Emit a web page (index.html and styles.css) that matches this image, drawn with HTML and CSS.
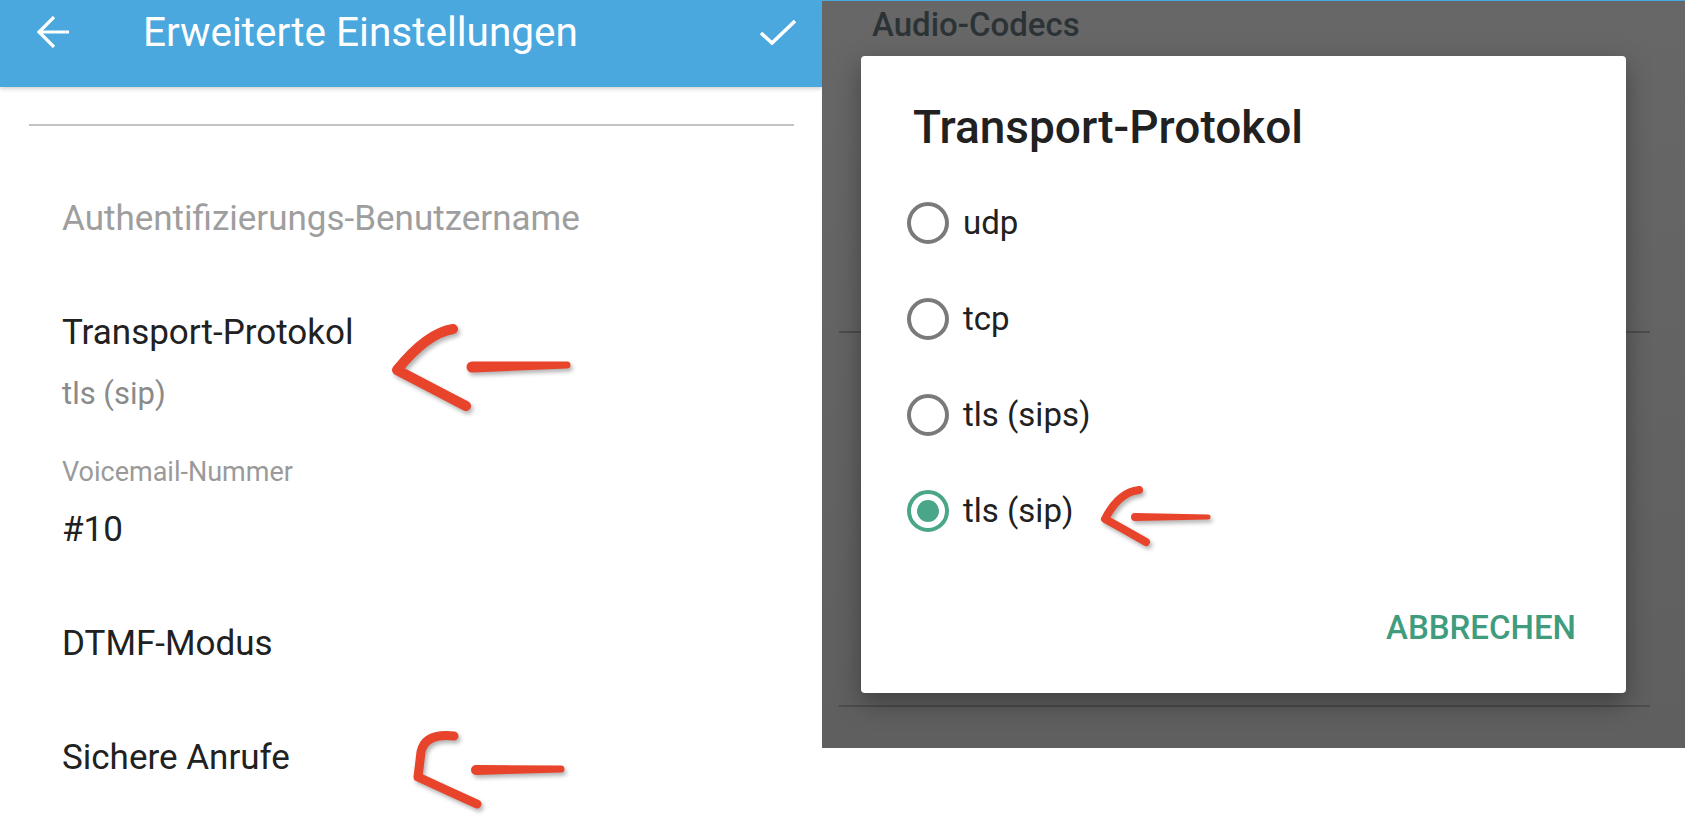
FILE: index.html
```html
<!DOCTYPE html>
<html lang="de">
<head>
    <meta charset="UTF-8">
    <meta name="viewport" content="width=device-width, initial-scale=1.0">
    <title>Erweiterte Einstellungen</title>
    <link rel="stylesheet" href="styles.css">
</head>
<body>
    <div class="shot">

        <!-- left screenshot: settings list -->
        <section class="prefs">
            <header class="toolbar">
                <svg class="back" width="32" height="32" viewBox="0 0 32 32">
                    <path d="M32 16H2M17 1L2 16l15 15" fill="none" stroke="#fff" stroke-width="3.2"/>
                </svg>
                <h1 class="toolbar-title">Erweiterte Einstellungen</h1>
                <svg class="done" width="36" height="26" viewBox="0 0 36 26">
                    <path d="M1 14l11 10L35 2" fill="none" stroke="#fff" stroke-width="3.6"/>
                </svg>
            </header>

            <div class="rule"></div>

            <div class="pref pref-off">Authentifizierungs-Benutzername</div>
            <div class="pref pref-title">Transport-Protokol</div>
            <div class="pref-sub">tls (sip)</div>
            <div class="pref-caption">Voicemail-Nummer</div>
            <div class="pref pref-value">#10</div>
            <div class="pref pref-title">DTMF-Modus</div>
            <div class="pref pref-title">Sichere Anrufe</div>
        </section>

        <!-- right screenshot: dialog over dimmed list -->
        <section class="dim">
            <div class="dim-head">Audio-Codecs</div>
            <div class="dim-rule dim-rule-1"></div>
            <div class="dim-rule dim-rule-2"></div>

            <div class="dialog">
                <h2 class="dialog-title">Transport-Protokol</h2>
                <div class="choice">
                    <span class="radio"></span>
                    <span class="choice-label">udp</span>
                </div>
                <div class="choice">
                    <span class="radio"></span>
                    <span class="choice-label">tcp</span>
                </div>
                <div class="choice">
                    <span class="radio"></span>
                    <span class="choice-label">tls (sips)</span>
                </div>
                <div class="choice">
                    <span class="radio radio-on"></span>
                    <span class="choice-label">tls (sip)</span>
                </div>
                <div class="dialog-actions">
                    <button class="btn-text">ABBRECHEN</button>
                </div>
            </div>
        </section>
    </div>

    <!-- hand drawn red arrows on top of the screenshots -->
    <svg class="marks" width="1685" height="831" viewBox="0 0 1685 831">
        <g fill="none" stroke="#e8432b" stroke-linecap="round" stroke-linejoin="round">
            <path d="M453 329Q427 333 397 370L466 406" stroke-width="10"/>
            <path d="M454 736Q425 733 421 752L418 777Q446 790 477 804" stroke-width="9"/>
            <path d="M1139 490Q1119 492 1105 519Q1127 531 1146 542" stroke-width="8"/>
        </g>
        <g fill="#e8432b">
            <path d="M472 361.5L567 361.5A3.5 3.5 0 0 1 567 368.5L472 372.5A5.5 5.5 0 0 1 472 361.5Z"/>
            <path d="M476 765L561 765.5A3.5 3.5 0 0 1 561 772.5L476 775A5 5 0 0 1 476 765Z"/>
            <path d="M1135 513L1208 514.5A2.5 2.5 0 0 1 1208 519.5L1135 521A4 4 0 0 1 1135 513Z"/>
        </g>
    </svg>
</body>
</html>
```

FILE: styles.css
```css
body {
    margin: 0;
    width: 1685px;
    height: 831px;
    overflow: hidden;
    background: #fff;
    font-family: Roboto, "Noto Sans", sans-serif;
    position: relative;
}

.shot {
    display: flex;
    align-items: flex-start;
}

/* ---------- left: settings list ---------- */

.prefs {
    width: 822px;
    flex: none;
}

.toolbar {
    height: 64px;
    padding: 0 26px 23px 37px;
    background: #4aa8de;
    display: flex;
    align-items: center;
    box-shadow: 0 2px 4px rgba(0, 0, 0, 0.18);
}

.back {
    flex: none;
}

.toolbar-title {
    margin: 0 0 0 74px;
    font-size: 40.5px;
    font-weight: 400;
    line-height: 48px;
    color: #fff;
}

.done {
    flex: none;
    margin-left: auto;
}

.rule {
    margin: 37px 28px 0 29px;
    height: 2px;
    background: #c4c4c4;
}

.pref {
    padding-left: 62px;
    font-size: 35px;
    line-height: 42px;
    color: #212121;
    margin-top: 72px;
}

.pref-off {
    color: #9e9e9e;
}

.pref-title:first-of-type {
    margin-top: 68px;
}

.pref-sub {
    padding-left: 62px;
    margin-top: 22px;
    font-size: 31px;
    line-height: 36px;
    color: #8a8a8a;
}

.pref-caption {
    padding-left: 62px;
    margin-top: 44px;
    font-size: 27px;
    line-height: 32px;
    color: #9a9a9a;
}

.pref-value {
    margin-top: 21px;
}

/* ---------- right: dimmed screen with dialog ---------- */

.dim {
    flex: 1;
    height: 747px;
    position: relative;
    border-top: 1px solid #4aa8de;
    background: linear-gradient(#676767, #5f5f5f);
}

.dim-head {
    padding: 5px 0 0 50px;
    font-size: 33px;
    font-weight: 500;
    line-height: 38px;
    color: #2b3336;
}

.dim-rule {
    margin: 0 35px 0 17px;
    height: 2px;
    background: #4d4d4d;
}

.dim-rule-1 {
    margin-top: 287px;
}

.dim-rule-2 {
    margin-top: 372px;
}

.dialog {
    position: absolute;
    left: 39px;
    top: 55px;
    width: 765px;
    height: 637px;
    box-sizing: border-box;
    padding: 44px 0 0 46px;
    background: #fff;
    border-radius: 4px;
    box-shadow: 0 10px 26px rgba(0, 0, 0, 0.35);
}

.dialog-title {
    margin: 0 0 21px 6px;
    font-size: 46px;
    font-weight: 500;
    line-height: 54px;
    color: #212121;
}

.choice {
    height: 96px;
    display: flex;
    align-items: center;
    gap: 14px;
}

.radio {
    width: 42px;
    height: 42px;
    box-sizing: border-box;
    border: 4.5px solid #7a7a7a;
    border-radius: 50%;
    position: relative;
}

.radio-on {
    border-color: #4aa688;
}

.radio-on::after {
    content: "";
    position: absolute;
    left: 5.5px;
    top: 5.5px;
    width: 22px;
    height: 22px;
    border-radius: 50%;
    background: #4aa688;
}

.choice-label {
    font-size: 33px;
    line-height: 40px;
    color: #212121;
}

.dialog-actions {
    display: flex;
    justify-content: flex-end;
    margin-top: 49px;
    padding-right: 50px;
}

.btn-text {
    padding: 0;
    border: 0;
    background: none;
    font-family: Roboto, "Noto Sans", sans-serif;
    font-size: 33px;
    font-weight: 500;
    line-height: 40px;
    color: #3f9c7c;
}

/* ---------- annotation ---------- */

.marks {
    position: absolute;
    left: 0;
    top: 0;
    pointer-events: none;
    filter: drop-shadow(2px 3px 2px rgba(0, 0, 0, 0.3));
}
```
